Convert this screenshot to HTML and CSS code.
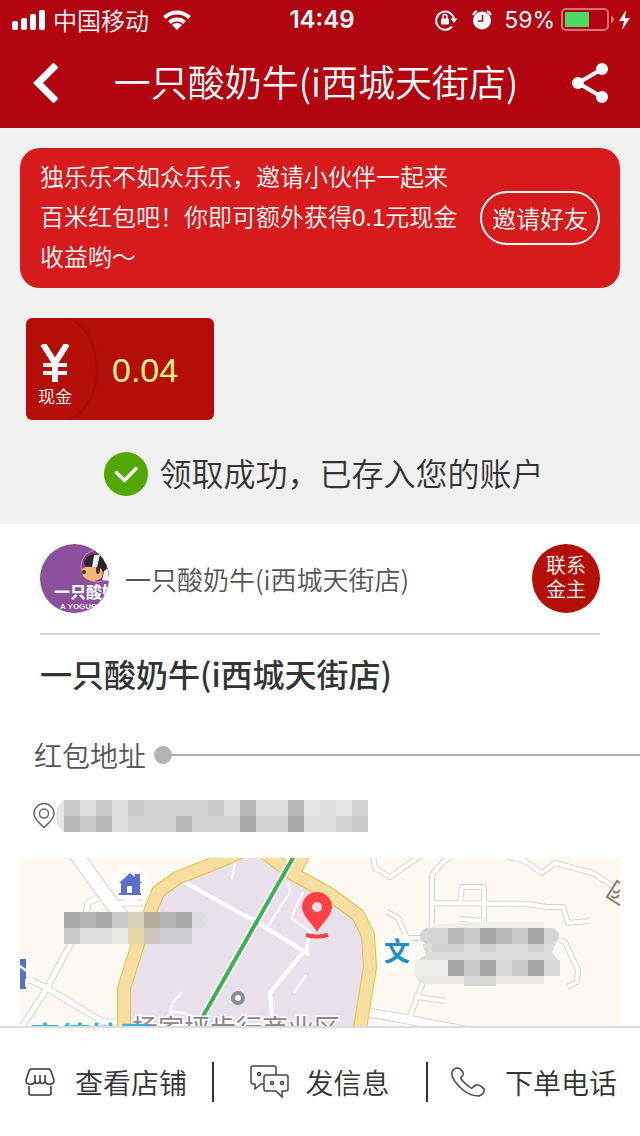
FILE: index.html
```
<!DOCTYPE html>
<html lang="zh-CN">
<head>
    <meta charset="UTF-8">
    <meta name="viewport" content="width=device-width, initial-scale=1.0">
    <title>一只酸奶牛(i西城天街店)</title>
    <link rel="stylesheet" href="styles.css">
</head>
<body>
    <header class="header">
        <div class="status-bar">
            <div class="status-left">
                <svg width="33" height="20" viewBox="0 0 33 20" fill="#fff">
                    <rect x="0" y="11" width="6" height="9" rx="2"/>
                    <rect x="9" y="8" width="6" height="12" rx="2"/>
                    <rect x="18" y="4" width="6" height="16" rx="2"/>
                    <rect x="27" y="0" width="6" height="20" rx="2"/>
                </svg>
                <span class="carrier">中国移动</span>
                <svg class="wifi" width="28" height="20" viewBox="0 0 28 20" fill="none" stroke="#fff" stroke-width="4">
                    <path d="M1.5 7.5a18 18 0 0 1 25 0"/>
                    <path d="M6.5 12.5a11 11 0 0 1 15 0"/>
                    <path d="M14 20l-5-5a7 7 0 0 1 10 0z" fill="#fff" stroke="none"/>
                </svg>
            </div>
            <div class="status-time">14:49</div>
            <div class="status-right">
                <svg width="23" height="22" viewBox="0 0 23 22" fill="none" stroke="#fff" stroke-width="2">
                    <path d="M17 17.500A9 9 0 1 1 19 10"/>
                    <path d="M15.500 9.500h7l-3.500 4.500z" fill="#fff" stroke="none"/>
                    <rect x="6" y="9.500" width="8" height="6" rx="1" fill="#fff" stroke="none"/>
                    <path d="M8 10V7.500a2 2 0 0 1 4 0V10" stroke-width="1.500"/>
                </svg>
                <svg class="alarm" width="20" height="20" viewBox="0 0 20 20">
                    <circle cx="10" cy="10.500" r="9" fill="#fff"/>
                    <path d="M10.500 5v6H6" fill="none" stroke="#b10410" stroke-width="1.500"/>
                    <path d="M1 5a8 8 0 0 1 4-4M19 5a8 8 0 0 0-4-4" fill="none" stroke="#fff" stroke-width="2"/>
                </svg>
                <span class="percent">59%</span>
                <svg width="71" height="24" viewBox="0 0 71 24">
                    <rect x="1" y="1" width="46" height="21" rx="4" fill="none" stroke="#dd7077" stroke-width="2"/>
                    <rect x="4" y="4" width="24" height="15" fill="#4cd964"/>
                    <path d="M50 8c4 1 4 6 0 7z" fill="#dd7077"/>
                    <path d="M65 2l-7 11h5l-2 9 8-12h-5z" fill="#fff"/>
                </svg>
            </div>
        </div>
        <div class="title-bar">
            <button class="icon-btn" aria-label="返回">
                <svg width="28" height="40" viewBox="0 0 28 40" fill="none" stroke="#fff" stroke-width="7">
                    <path d="M24 2L6 20l18 18"/>
                </svg>
            </button>
            <h1>一只酸奶牛(i西城天街店)</h1>
            <button class="icon-btn" aria-label="分享">
                <svg width="36" height="40" viewBox="0 0 36 40" fill="#fff">
                    <path d="M30 6L6 20l24 14" fill="none" stroke="#fff" stroke-width="4"/>
                    <circle cx="30" cy="6" r="6"/>
                    <circle cx="6" cy="20" r="6"/>
                    <circle cx="30" cy="34" r="6"/>
                </svg>
            </button>
        </div>
    </header>

    <section class="reward">
        <div class="promo">
            <p>独乐乐不如众乐乐，邀请小伙伴一起来百米红包吧！你即可额外获得0.1元现金收益哟～</p>
            <button class="invite-btn">邀请好友</button>
        </div>
        <div class="cash">
            <div class="cash-type">
                <svg width="30" height="38" viewBox="0 0 30 38" fill="none" stroke="#fff" stroke-width="6">
                    <path d="M3 0l12 19L27 0M15 18v20"/>
                    <path d="M3 21h24M3 29h24" stroke-width="4"/>
                </svg>
                <span>现金</span>
            </div>
            <div class="cash-amount">0.04</div>
        </div>
        <div class="success">
            <svg width="44" height="44" viewBox="0 0 44 44">
                <circle cx="22" cy="22" r="22" fill="#52a800"/>
                <path d="M12.500 20.500l8 8 11.500-12" fill="none" stroke="#fff" stroke-width="3.500" stroke-linecap="round"/>
            </svg>
            <span>领取成功，已存入您的账户</span>
        </div>
    </section>

    <main class="detail">
        <div class="shop">
            <svg class="avatar" width="69" height="69" viewBox="0 0 69 69">
                <rect width="69" height="69" fill="#8b4f9b"/>
                <circle cx="57" cy="22" r="16" fill="#7a3f88" stroke="#f07fb0" stroke-width="1"/>
                <path d="M44 18l3-5 6-3 16 2v22l-10-3-12-5z" fill="#2c2528"/>
                <path d="M54 11l6 0-3 12-5 1z" fill="#eef0fa"/>
                <path d="M64 27l5-4v14l-7-1z" fill="#efefef"/>
                <path d="M42 25c5-4 10-1 14-2 7 0 9 8 4 12-6 4-14 1-17-3z" fill="#f0b878"/>
                <circle cx="44" cy="28" r="2" fill="#4b2e2a"/>
                <ellipse cx="58" cy="26" rx="2" ry="4" fill="#4b2e2a"/>
                <text class="logo-cn" x="14" y="54">一只酸奶牛</text>
                <text class="logo-en" x="20" y="65">A YOGURT COW</text>
            </svg>
            <span class="shop-name">一只酸奶牛(i西城天街店)</span>
            <button class="contact-btn">联系<br>金主</button>
        </div>
        <h2>一只酸奶牛(i西城天街店)</h2>
        <div class="address-title">
            <h3>红包地址</h3>
            <i class="dot"></i>
            <i class="line"></i>
        </div>
        <div class="address">
            <svg width="22" height="26" viewBox="0 0 22 26" fill="none" stroke="#666" stroke-width="1.500">
                <path d="M11 24.500C7 20.500 1 16.500 1 10.500a10 10 0 0 1 20 0c0 6-6 10-10 14z"/>
                <circle cx="11" cy="10.500" r="4.500"/>
            </svg>
            <!-- 打码的地址 -->
            <svg class="masked" width="312" height="32" viewBox="0 0 312 32" shape-rendering="crispEdges">
                <path d="M8 0C3 2 0 10 0 16s3 14 8 16z" fill="#e6e6e6"/>
                <rect x="8" width="304" height="32" fill="#d3d3d3"/>
                <path fill="#cacaca" d="M8 0h16v16H8zM40 0h16v16H40zM72 0h16v16H72zM152 0h16v16h-16zM24 16h16v16H24zM232 0h16v16h-16zM296 16h16v16h-16z"/>
                <path fill="#dfdfdf" d="M24 0h16v16H24zM56 0h16v32H56zM168 0h16v16h-16zM200 0h32v16h-32zM264 0h16v32h-16zM248 16h16v16h-16z"/>
                <path fill="#b7b7b7" d="M8 16h16v16H8zM40 16h16v16H40zM120 16h16v16h-16zM184 0h16v16h-16zM232 0h16v16h-16z"/>
                <path fill="#a8a8a8" d="M184 16h16v16h-16zM232 16h16v16h-16z"/>
                <path fill="#e5e5e5" d="M248 0h16v16h-16zM280 0h16v16h-16z"/>
            </svg>
        </div>
        <div class="map">
            <svg width="600" height="168" viewBox="0 0 600 168" preserveAspectRatio="xMinYMin slice">
                <rect width="600" height="168" fill="#fdf9f2"/>
                <!-- 小路: 灰边 + 白心 -->
                <g fill="none" stroke-linejoin="round">
                    <g stroke="#d6d4d0">
                        <path stroke-width="15" d="M55-5L95 50l15 18"/>
                        <path stroke-width="7" d="M77 40l-9 5-2 13-16 29-23 43-27 42M93 45h30M8 121l19 9 56 34h18"/>
                        <path stroke-width="6" d="M353-2l2 12 15 9 30-21M367 54l11 6 9 20h18M433-2l-10 6-11 13v52M412 45l95 1 20 3h16l5 16 22-2M440 44l2-15h22v35M440 61l24 2M487-1l16 3 19 13 13-10 38 10 24 16M540 82l5 2 13 28-1 12-10 5M403 125l-6 14-7 20M397 139l28 4"/>
                        <path stroke-width="10" d="M345 154l35 6 67 13"/>
                    </g>
                    <g stroke="#fff">
                        <path stroke-width="13" d="M55-5L95 50l15 18"/>
                        <path stroke-width="5" d="M77 40l-9 5-2 13-16 29-23 43-27 42M93 45h30M8 121l19 9 56 34h18"/>
                        <path stroke-width="4" d="M353-2l2 12 15 9 30-21M367 54l11 6 9 20h18M433-2l-10 6-11 13v52M412 45l95 1 20 3h16l5 16 22-2M440 44l2-15h22v35M440 61l24 2M487-1l16 3 19 13 13-10 38 10 24 16M540 82l5 2 13 28-1 12-10 5M403 125l-6 14-7 20M397 139l28 4"/>
                        <path stroke-width="8" d="M345 154l35 6 67 13"/>
                    </g>
                </g>
                <!-- 商圈 -->
                <path fill="#e8e1ec" d="M104 170v-40l13-41 11-30 10-25 19-14 43-17 20-8h27l26 21 35 19 30 22 10 20 2 32-10 61z"/>
                <g fill="none" stroke="#fff" stroke-width="4">
                    <path d="M163 23l37 21 33 18 54 33v-10M285 92l-35 43 2 24M287 87l4-13"/>
                    <path stroke-width="2" d="M215 4l-3 17M268 24l2 10-22 34M283 34l-12 26 20 14M286 117l-12 18M162 134l-9 10-3 10 17 1"/>
                </g>
                <g fill="none" stroke-linejoin="round">
                    <path stroke="#e6c143" stroke-width="14" d="M104 170v-40l13-41 11-30 10-25 19-14 43-17 25-11M240-9l33 25 35 19 30 22 10 20 2 32-10 61M273 16l12-22"/>
                    <path stroke="#f6dea0" stroke-width="12" d="M104 170v-40l13-41 11-30 10-25 19-14 43-17 25-11M240-9l33 25 35 19 30 22 10 20 2 32-10 61M273 16l12-22"/>
                    <path stroke="#fff" stroke-width="7" d="M274-2l-92 162"/>
                    <path stroke="#3fae55" stroke-width="4" d="M274-2l-92 162"/>
                </g>
                <!-- 地标 -->
                <g fill="#fff">
                    <circle cx="110" cy="25" r="18"/>
                    <circle cx="-4" cy="112" r="18"/>
                    <circle cx="377" cy="94" r="18"/>
                </g>
                <g fill="#5b70c9">
                    <path d="M99 25l11-10 5 4v-3h5v7l2 2h-2v10h1v2H99v-2h2V25zM107 35h5v-7h-5z" fill-rule="evenodd"/>
                    <path d="M-12 111l12-10h6v10l-7-5v3l7 5v7h-1v8h1v2H-9v-2h3z"/>
                </g>
                <text class="school" x="364" y="103">文</text>
                <circle cx="218" cy="140" r="5" fill="#fff" stroke="#8a8f94" stroke-width="4"/>
                <path d="M603 27l-6-4-10 16 14 9M591 38q5 4 8-1M593 33q4 4 8-2" fill="none" stroke="#8a7a6b" stroke-width="2"/>
                <path fill="#ff4044" fill-rule="evenodd" d="M297 74c-4-8-15-16-15-25a15 15 0 0 1 30 0c0 9-11 17-15 25zM297 44a5 5 0 1 0 0 10 5 5 0 0 0 0-10z"/>
                <path d="M286 77q11 3 22 0" fill="none" stroke="#ff4044" stroke-width="4"/>
                <text class="area" x="112" y="180">杨家坪步行商业区</text>
                <text class="brand" x="10" y="190">高德地图</text>
                <!-- 打码的地名 -->
                <g shape-rendering="crispEdges">
                    <path fill="#dfdbe4" d="M172 54h10q6 4 6 8t-6 8h-10z"/>
                    <path fill="#a9a9a9" d="M44 54h16v16H44zM76 54h16v16H76zM156 54h16v16h-16z"/>
                    <path fill="#b4b4b4" d="M60 54h16v16H60zM140 54h16v16h-16z"/>
                    <path fill="#c8c8c8" d="M92 54h16v16H92zM44 70h16v16H44z"/>
                    <path fill="#d9d2b8" d="M108 54h16v16h-16z"/>
                    <path fill="#b6ae98" d="M124 54h16v16h-16z"/>
                    <path fill="#dfdfdc" d="M60 70h32v16H60z"/>
                    <path fill="#e9e9e5" d="M92 70h16v16H92z"/>
                    <path fill="#e3d6aa" d="M108 70h16v16h-16z"/>
                    <path fill="#cdc6bc" d="M124 70h16v16h-16z"/>
                    <path fill="#cfcbd2" d="M140 70h32v16h-32z"/>

                    <path fill="#f2efe9" d="M412 70v-3l32-3h80v6z"/>
                    <rect x="400" y="70" width="139" height="16" rx="8" fill="#d5d5d4"/>
                    <path fill="#dddddb" d="M402 86h134l-4 8 6 8H398q4-4 8-5z"/>
                    <rect x="394" y="102" width="146" height="16" fill="#efeeea"/>
                    <path fill="#e9e8e4" d="M396 118h128v8H404q-7-2-8-8z"/>
                    <path fill="#bababb" d="M428 70h16v16h-16zM476 70h16v16h-16z"/>
                    <path fill="#c8c8c8" d="M444 70h16v16h-16zM492 70h16v16h-16zM444 102h16v16h-16zM492 102h16v16h-16z"/>
                    <path fill="#a5a5a5" d="M460 70h16v16h-16zM508 70h16v16h-16zM428 102h16v16h-16zM460 102h16v16h-16zM508 102h16v16h-16z"/>
                    <path fill="#d0d0ce" d="M412 86h32v8h-32zM460 86h16v8h-16zM508 86h16v8h-16z"/>
                    <path fill="#d7d7d5" d="M476 102h16v16h-16zM524 102h16v16h-16zM444 118h32v10h-32z"/>
                </g>
            </svg>
        </div>
    </main>

    <nav class="bottom-bar">
        <button>
            <svg width="30" height="30" viewBox="0 0 30 30" fill="none" stroke="#333" stroke-width="1.500">
                <path d="M6 2h18q1 0 2 2l3 9q0 4-3 4-4 1-6-2-3 3-5 0-3 3-5 0-2 3-6 2-3 0-3-4l3-9q1-2 2-2z"/>
                <path d="M10 15V8M15 15V8M20 15V8M4 19v7q0 2 2 2h18q2 0 2-2v-7"/>
            </svg>
            查看店铺
        </button>
        <button class="message">
            <svg width="39" height="34" viewBox="0 0 39 34" fill="none" stroke="#444" stroke-width="1.500">
                <path d="M26 10V3q0-2-2-2H3Q1 1 1 3v14q0 2 2 2h2v5l6-5h3"/>
                <path d="M16 10h20q2 0 2 2v12q0 2-2 2h-4v6l-6-6H16q-2 0-2-2V12q0-2 2-2z"/>
                <circle cx="9" cy="9" r="1.500"/>
                <circle cx="22" cy="18" r="1.500"/>
                <circle cx="32" cy="18" r="1.500"/>
            </svg>
            发信息
        </button>
        <button>
            <svg width="34" height="30" viewBox="0 0 34 30" fill="none" stroke="#444" stroke-width="1.500">
                <path d="M1 5C2 2 5 1 7 1c3 1 6 4 5 7-1 2-3 2-2 4 3 4 6 6 10 9 2 1 2-2 5-3 4-1 6 2 8 4 1 3-2 6-5 7-5 0-11-2-16-6C5 17 0 10 1 5z"/>
            </svg>
            下单电话
        </button>
    </nav>
</body>
</html>
```

FILE: styles.css
```
* {
    box-sizing: border-box;
}

body {
    margin: 0;
    min-height: 100vh;
    display: flex;
    flex-direction: column;
    font-family: "Noto Sans CJK SC", sans-serif;
    font-weight: 350;
    color: #333;
    background-color: #fff;
}

h1, h2, h3, p {
    margin: 0;
}

button {
    padding: 0;
    border: none;
    background: none;
    color: inherit;
    font: inherit;
    cursor: pointer;
}

svg {
    display: block;
    flex-shrink: 0;
}

/* 顶部 */
.header {
    background-color: #b10410;
    color: #fff;
}

.status-bar {
    display: grid;
    grid-template-columns: 1fr auto 1fr;
    align-items: center;
    height: 40px;
    padding: 0 8px 0 12px;
    font-size: 24px;
    line-height: 40px;
}

.status-left,
.status-right {
    display: flex;
    align-items: center;
}

.status-right {
    justify-content: flex-end;
}

.carrier {
    margin: 0 14px 0 8px;
}

.status-time {
    font-family: Inter, sans-serif;
    font-weight: 600;
}

.alarm {
    margin: 0 12px 0 14px;
}

.percent {
    margin-right: 6px;
    font-family: Inter, sans-serif;
    font-size: 23px;
    font-weight: 400;
}

.title-bar {
    display: flex;
    align-items: center;
    justify-content: space-between;
    height: 88px;
    padding: 0 32px 2px;
}

.title-bar h1 {
    padding-bottom: 4px;
    font-size: 37px;
    font-weight: 350;
    line-height: 48px;
}

/* 红包 */
.reward {
    padding: 20px 20px 28px;
    background-color: #f0f0f0;
}

.promo {
    display: flex;
    align-items: center;
    gap: 10px;
    padding: 10px 20px;
    border-radius: 20px;
    background-color: #d71a1b;
    color: #fff;
    font-size: 24px;
    line-height: 40px;
}

.promo p {
    flex: 1;
    font-family: "Liberation Sans", "Noto Sans CJK SC", sans-serif;
}

.invite-btn {
    width: 120px;
    height: 54px;
    border: 2px solid #fff;
    border-radius: 27px;
}

.cash {
    display: flex;
    width: 188px;
    height: 102px;
    margin: 30px 6px 32px;
    border-radius: 6px;
    background-color: #b30f06;
    overflow: hidden;
}

.cash-type {
    display: flex;
    flex-direction: column;
    align-items: center;
    width: 70px;
    padding: 26px 12px 0 0;
    border-radius: 0 50% 50% 0;
    box-shadow: 1px 0 3px #980c05;
    color: #fff;
    font-size: 17px;
    line-height: 28px;
    white-space: nowrap;
}

.cash-amount {
    flex: 1;
    padding-left: 16px;
    color: #ffef8c;
    font-family: "Liberation Sans", sans-serif;
    font-size: 34px;
    font-weight: 400;
    line-height: 104px;
}

.success {
    display: flex;
    align-items: center;
    justify-content: center;
    gap: 11px;
    padding-left: 8px;
    font-size: 32px;
    line-height: 40px;
}

.success span {
    padding-bottom: 4px;
}

/* 店铺 */
.detail {
    flex: 1;
    display: flex;
    flex-direction: column;
}

.shop {
    display: flex;
    align-items: center;
    margin: 0 40px;
    padding: 20px 0;
    border-bottom: 2px solid #d9d9d9;
}

.avatar {
    border-radius: 50%;
}

.logo-cn {
    font-size: 16px;
    font-weight: 900;
    fill: #e8f5f0;
}

.logo-en {
    font-family: "Liberation Sans", sans-serif;
    font-size: 8px;
    font-weight: bold;
    fill: #f3e6f5;
}

.shop-name {
    flex: 1;
    padding-left: 16px;
    color: #555;
    font-size: 26px;
}

.contact-btn {
    width: 68px;
    height: 69px;
    padding-bottom: 4px;
    border-radius: 50%;
    background-color: #b30f06;
    color: #fff;
    font-size: 20px;
    line-height: 24px;
}

h2 {
    padding: 14px 40px 0;
    font-size: 32px;
    font-weight: 500;
    line-height: 48px;
}

.address-title {
    display: flex;
    align-items: center;
    margin-top: 38px;
    padding-left: 34px;
}

h3 {
    color: #555;
    font-size: 28px;
    font-weight: 350;
    line-height: 40px;
}

.dot {
    width: 18px;
    height: 18px;
    margin-left: 8px;
    border-radius: 50%;
    background-color: #b3b3b3;
}

.line {
    flex: 1;
    height: 2px;
    background-color: #aaa;
}

.address {
    display: flex;
    align-items: center;
    gap: 1px;
    padding: 25px 33px 26px;
}

/* 地图, 占满剩余高度 */
.map {
    flex: 1 0 168px;
    display: flex;
    height: 168px;
    margin: 0 20px;
    overflow: hidden;
}

.map svg {
    width: 100%;
    height: 100%;
}

.school {
    font-size: 26px;
    font-weight: bold;
    fill: #1c8fcb;
}

.area {
    font-size: 26px;
    font-weight: 400;
    fill: #85858c;
    stroke: #fff;
    stroke-width: 3px;
    paint-order: stroke;
}

.brand {
    font-size: 30px;
    font-weight: bold;
    fill: #3bb0dd;
}

/* 底部操作 */
.bottom-bar {
    display: flex;
    height: 110px;
    border-top: 2px solid #dcdcdc;
    background-color: #fff;
}

.bottom-bar button {
    flex: 1;
    display: flex;
    align-items: center;
    justify-content: center;
    gap: 20px;
    height: 40px;
    margin-top: 34px;
    font-size: 28px;
    line-height: 40px;
    white-space: nowrap;
}

.bottom-bar button + button {
    border-left: 2px solid #333;
}

.bottom-bar .message {
    gap: 16px;
}
```
